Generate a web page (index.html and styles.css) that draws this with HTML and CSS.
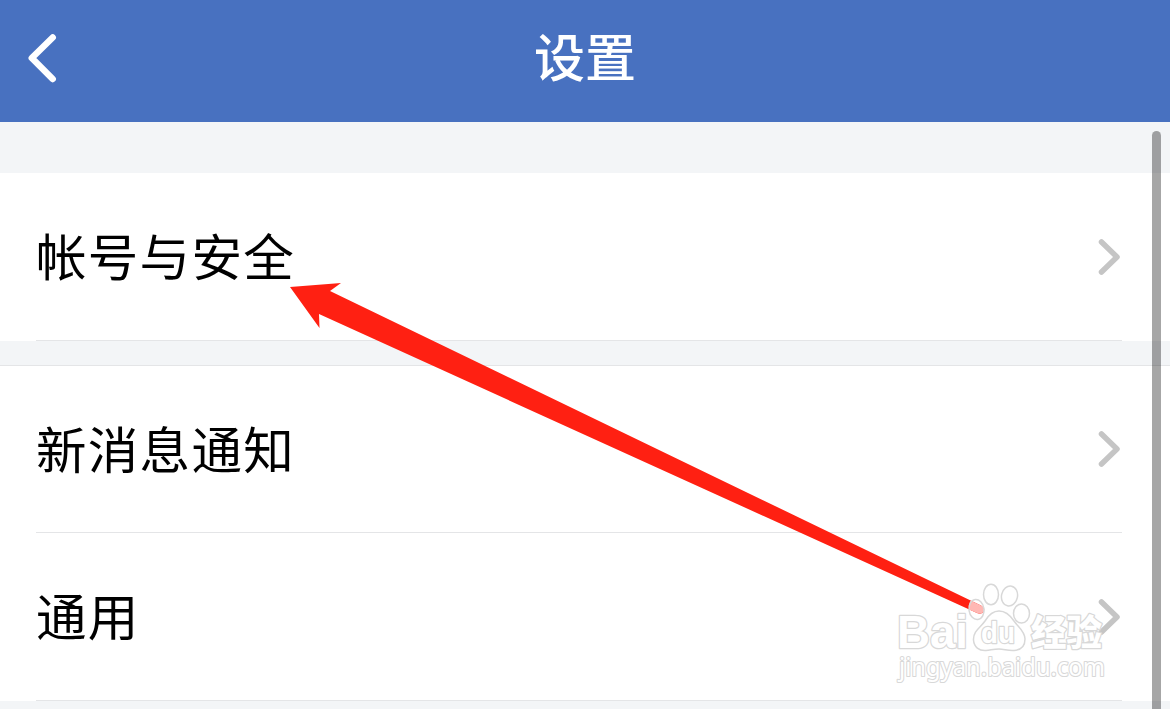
FILE: index.html
```
<!DOCTYPE html>
<html lang="zh-CN">
	<head>
		<meta charset="utf-8">
		<title>设置</title>
		<link rel="stylesheet" href="styles.css">
	</head>
	<body>
		<div class="app">
			<!-- 顶部导航 -->
			<div class="header">
				<svg class="back" width="32" height="52" viewBox="0 0 32 52">
					<path d="M26.700 5.500L5.800 26L26.700 47"/>
				</svg>
				<h1>设置</h1>
			</div>

			<!-- 设置列表 -->
			<ul class="group first">
				<li class="item">
					<span>帐号与安全</span>
					<svg class="arrow" width="24" height="38" viewBox="0 0 24 38"><path d="M3.500 4l15.500 15L3.500 34"/></svg>
				</li>
			</ul>
			<ul class="group">
				<li class="item">
					<span>新消息通知</span>
					<svg class="arrow" width="24" height="38" viewBox="0 0 24 38"><path d="M3.500 4l15.500 15L3.500 34"/></svg>
				</li>
				<li class="item">
					<span>通用</span>
					<svg class="arrow" width="24" height="38" viewBox="0 0 24 38"><path d="M3.500 4l15.500 15L3.500 34"/></svg>
				</li>
			</ul>

			<!-- 滚动条 -->
			<div class="scrollbar"></div>

			<!-- 红色箭头和水印 -->
			<svg class="overlay" width="1170" height="709" viewBox="0 0 1170 709">
				<path class="pointer" d="M290 287L341 283L330 291L981 605.500Q985 608 984 611Q982 615 977 613L319 314L319.500 328Z"/>
				<path class="pointer-end" d="M970.500 600.500L981 605.500Q985 608 984 611Q982 615 977 613L969 609.500Q968.500 604 970.500 600.500Z"/>
				<g class="mark">
					<ellipse class="hollow" cx="976.500" cy="609.500" rx="7.500" ry="10" transform="rotate(-8 976.5 609.5)"/>
					<ellipse cx="991" cy="594.500" rx="7.500" ry="10.300"/>
					<ellipse cx="1009.500" cy="596" rx="8" ry="10" transform="rotate(12 1009.5 596)"/>
					<ellipse cx="1021.500" cy="613.500" rx="8" ry="9.500"/>
					<path d="M999 611C992 611 988 616 985 621C981 627 973 631 973.500 640C974 647 979 651 986 650.500C991 650 994 649 999 649C1004 649 1008 651 1014 650.500C1021 650 1025 646 1025 639C1025 631 1018 627 1014 621C1010 615 1006 611 999 611Z"/>
					<text class="logo" x="897" y="648" textLength="71" lengthAdjust="spacingAndGlyphs">Bai</text>
					<text class="du" x="981" y="643" textLength="34" lengthAdjust="spacingAndGlyphs">du</text>
					<text class="cn" x="1031" y="646" textLength="71" lengthAdjust="spacingAndGlyphs">经验</text>
					<text class="site" x="899" y="676" textLength="206" lengthAdjust="spacingAndGlyphs">jingyan.baidu.com</text>
				</g>
			</svg>
		</div>
	</body>
</html>
```
FILE: styles.css
```
* {
    margin: 0;
    padding: 0;
    box-sizing: border-box;
}

body {
    background: #f3f5f7;
    font-family: "Noto Sans CJK SC", "Noto Sans", sans-serif;
}

.app {
    position: relative;
    width: 1170px;
    height: 709px;
    overflow: hidden;
}

.header {
    display: grid;
    grid-template-columns: 60px 1fr 60px;
    align-items: center;
    height: 122px;
    padding: 0 0 6px;
    background: #4871c0;
    color: #fff;
}

.header h1 {
    padding-bottom: 7px;
    font-size: 51px;
    font-weight: 500;
    line-height: 76px;
    text-align: center;
}

.header .back {
    margin-left: 26px;
}

.back path,
.arrow path {
    fill: none;
    stroke: #fff;
    stroke-width: 6.5;
    stroke-linecap: round;
    stroke-linejoin: round;
}

.group {
    margin-top: 24px;
    border-top: 1px solid #e4e5e7;
    background: #fff;
    list-style: none;
}

.group.first {
    margin-top: 51px;
    border-top: none;
}

.item {
    display: flex;
    align-items: center;
    justify-content: space-between;
    height: 168px;
    margin: 0 48px 0 36px;
    border-bottom: 1px solid #e4e5e7;
    color: #000;
    font-size: 50.5px;
    letter-spacing: 1.3px;
    line-height: 76px;
}

.item span {
    padding-bottom: 5px;
}

.group:not(.first) .item:first-child {
    height: 167px;
}

.arrow path {
    stroke: #c5c5c5;
    stroke-width: 5.5;
}

.scrollbar {
    position: absolute;
    top: 131px;
    left: 1152px;
    width: 9px;
    height: 600px;
    border-radius: 5px;
    background: rgba(0, 0, 0, 0.35);
}

.overlay {
    position: absolute;
    top: 0;
    left: 0;
}

.pointer {
    fill: #ff2012;
}

.pointer-end {
    fill: #ffb8b4;
}

/* 水印 */
.mark {
    fill: #fff;
    stroke: #d8d8d8;
    stroke-width: 1.5;
}

.mark .hollow {
    fill: none;
}

.mark text {
    paint-order: stroke;
    stroke-width: 2.5;
    stroke-linejoin: round;
}

.logo,
.du {
    font-family: "Liberation Sans", sans-serif;
    font-weight: bold;
}

.logo {
    font-size: 46px;
}

.du {
    font-size: 30px;
}

.cn {
    font-size: 36px;
    font-weight: 900;
}

.mark .site {
    font-family: "Noto Sans", sans-serif;
    font-size: 25px;
    font-weight: 400;
    stroke-width: 2.2;
}
```
